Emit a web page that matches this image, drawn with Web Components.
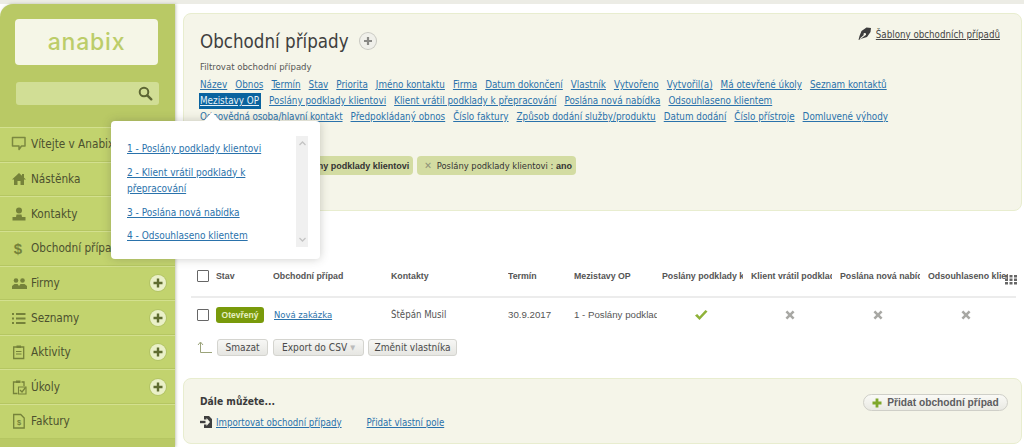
<!DOCTYPE html>
<html lang="cs"><head><meta charset="utf-8"><title>Obchodní případy</title>
<style>
html,body{margin:0;height:447px;overflow:hidden;background:#ecece5}
body{font:9.800px "DejaVu Sans",sans-serif;font-stretch:condensed;color:#444}
</style></head><body>
<ab-app>
<ab-sidebar slot="side">
<ab-nav icon="chat">Vítejte v Anabix</ab-nav>
<ab-nav icon="home">Nástěnka</ab-nav>
<ab-nav icon="user">Kontakty</ab-nav>
<ab-nav icon="dollar">Obchodní případy</ab-nav>
<ab-nav icon="users" plus>Firmy</ab-nav>
<ab-nav icon="list" plus>Seznamy</ab-nav>
<ab-nav icon="clip" plus>Aktivity</ab-nav>
<ab-nav icon="task" plus>Úkoly</ab-nav>
<ab-nav icon="inv">Faktury</ab-nav>
</ab-sidebar>
<ab-filter slot="main"></ab-filter>
<ab-table slot="main"></ab-table>
<ab-more slot="main"></ab-more>
<ab-popover slot="over"></ab-popover>
</ab-app>
<script>
const ICONS={
chat:'<path d="M1.500 1.500h12.500v8.500h-3.500l-2.500 3.500v-3.500H1.500z" fill="none" stroke="#7b8840" stroke-width="1.500" stroke-linejoin="round"/>',
home:'<path d="M1 8.500 8 2l3 2.800V3h2v3.700l2 1.800h-2V14H9.500v-4h-3v4H3V8.500z" fill="#75823a"/>',
user:'<circle cx="8" cy="4.500" r="3" fill="#75823a"/><path d="M5.500 8.500h5l.5 2.500h3.500v3.500h-13V11H5z" fill="#75823a"/>',
dollar:'<text x="7" y="14" text-anchor="middle" font-family="Liberation Sans" font-weight="700" font-size="15" fill="#75823a">$</text>',
users:'<circle cx="5" cy="5.500" r="2.300" fill="#75823a"/><circle cx="11.500" cy="5.500" r="2.300" fill="#75823a"/><path d="M1 14v-3l2.500-2h3L8 11l1.500-2h4L16 11v3z" fill="#75823a"/>',
list:'<path d="M1 3h2v2H1zm0 4.500h2v2H1zM1 12h2v2H1z" fill="#75823a"/><path d="M5 3h9.500v2H5zm0 4.500h9.500v2H5zM5 12h9.500v2H5z" fill="#75823a"/>',
clip:'<path d="M2.700 3h10v11.500h-10z" fill="none" stroke="#75823a" stroke-width="1.300"/><path d="M5.500 1.500h4.500v2.500H5.500z" fill="#75823a"/><path d="M5 7.500h5.500M5 10h5.500" stroke="#75823a" stroke-width="1.200"/>',
task:'<path d="M10.500 3H13v4M6.500 14.500H2.500V3h2.500" fill="none" stroke="#75823a" stroke-width="1.300"/><path d="M5 1.500h4.500v2.500H5z" fill="#75823a"/><path d="M7.500 8h7.500v7H7.500z" fill="none" stroke="#75823a" stroke-width="1.100"/><path d="m9 11 2 2 3.500-4.500" fill="none" stroke="#75823a" stroke-width="1.300"/>',
inv:'<path d="M2.700 1.500h7l3.500 3.500v10h-10.500z" fill="none" stroke="#75823a" stroke-width="1.300"/><text x="8" y="12" text-anchor="middle" font-family="Liberation Sans" font-weight="700" font-size="7.500" fill="#75823a">$</text>'
};
function def(name,css,html){
  customElements.define(name,class extends HTMLElement{
    connectedCallback(){
      if(this.shadowRoot)return;
      const r=this.attachShadow({mode:'open'});
      r.innerHTML='<style>'+css+'</style>'+(typeof html==='function'?html(this):html);
    }
  });
}
const linkCss='a{color:#2a72ab;text-decoration:underline;white-space:nowrap}';
const X='<svg width="10" height="10" viewBox="0 0 10 10"><path d="M2.300 .5 5 3.200 7.700 .5l1.800 1.800L6.800 5l2.700 2.700-1.800 1.800L5 6.800 2.300 9.500.5 7.700 3.200 5 .5 2.300z" fill="#a8a8a4"/></svg>';
def('ab-app',`:host{display:block;position:relative;width:1024px;height:447px;overflow:hidden}
.w{display:grid;grid-template-columns:175px 1fr;margin-top:4px;height:443px;background:#fff}
.m{display:flex;flex-direction:column;padding:9px 2px 0 8px}`,
`<div class="w"><slot name="side"></slot><div class="m"><slot name="main"></slot></div></div><slot name="over"></slot>`);

def('ab-sidebar',`:host{display:block;background:#b9c965;border-top-left-radius:13px;box-shadow:1px 0 3px rgba(90,100,50,.35);height:443px;overflow:hidden;position:relative;z-index:1}
.logo{margin:15px 17px 0 15px;height:46px;border-radius:4px;background:#f5f6e7;display:flex;align-items:center;justify-content:center;font:500 23px Inter,sans-serif;letter-spacing:.8px;color:#bccd69;font-stretch:normal}
.s{margin:17px 16px 0 16px;height:23px;border-radius:3px;background:#d1de95;display:flex;align-items:center;justify-content:flex-end;padding-right:6px;box-sizing:border-box}
.n{margin-top:22px;display:flex;flex-direction:column;background:#c2d36e}`,
`<div class="logo">anabix</div>
<div class="s"><svg width="15" height="15" viewBox="0 0 15 15"><circle cx="6" cy="6" r="4.300" fill="none" stroke="#5d6634" stroke-width="2"/><path d="m9.300 9.300 4 4" stroke="#5d6634" stroke-width="2.400" stroke-linecap="round"/></svg></div>
<div class="n"><slot></slot></div>`);

def('ab-nav',`:host{display:flex;align-items:center;height:34.650px;box-sizing:border-box;border-top:1px solid #d3e08f;border-bottom:1px solid #b5c662;padding:0 9px 0 11px;font:11.700px "DejaVu Sans",sans-serif;font-stretch:condensed;color:#4c512e;white-space:nowrap}
svg{flex:none;margin-right:4px}
span{flex:1}
.p{flex:none;width:16px;height:16px;border-radius:50%;background:#eaf0c8;box-shadow:0 0 0 1px #b3c466;display:grid;place-items:center}
.p svg{margin:0}`,
h=>`<svg width="16" height="16" viewBox="0 0 16 16">${ICONS[h.getAttribute('icon')]}</svg><span><slot></slot></span>${h.hasAttribute('plus')?'<div class="p"><svg width="10" height="10" viewBox="0 0 10 10"><path d="M3.800 .5h2.400v3.300H9.500v2.400H6.200v3.300H3.800V6.200H.5V3.800h3.300z" fill="#5f6c30"/></svg></div>':''}`);

def('ab-chip',`:host{display:inline-flex;align-items:center;height:19px;box-sizing:border-box;border-radius:4px;background:#d3dca2;padding:0 4px 0 7px;font-size:9.300px;color:#333;white-space:nowrap}
i{font-style:normal;color:#8f9377;margin-right:5px;font-size:10px}`,`<i>✕</i><slot></slot>`);

def('ab-filter',`:host{display:block;height:198px;box-sizing:border-box;background:#f5f5e9;border:1px solid #e8edcf;border-radius:8px;padding:0 21px 0 16px;font:9.800px "DejaVu Sans",sans-serif;font-stretch:condensed}
.t{display:flex;align-items:center;justify-content:space-between;padding-top:10px;height:34px;box-sizing:content-box}
h1{margin:0;font:400 18.600px "DejaVu Sans",sans-serif;font-stretch:condensed;color:#3f3f3f;display:flex;align-items:center;gap:11px}
.pl{width:16px;height:16px;border-radius:50%;background:#f0f0ea;box-shadow:0 0 0 1px #c9c9c2;display:grid;place-items:center}
.tp{display:flex;align-items:center;gap:4px;font-size:9.700px;color:#444;align-self:flex-start;margin-top:3px}
.tp a{color:#444;text-decoration:underline}
.f{margin-top:1px;color:#555;height:16px;line-height:16px;font-size:9.500px}
.rows{margin-top:2px}
.r{display:flex;gap:8px;height:16px;line-height:16px}
${linkCss}
.hi{background:#0a639f;color:#e8f2f8;padding:0 2px 0 1px;margin-left:-1px}
.tight{letter-spacing:-.1px}
.c{display:flex;gap:4px;margin-top:31px;padding-left:10px}
.c b{font:700 9px "Liberation Sans",sans-serif}
`,`<div class="t"><h1>Obchodní případy<span class="pl"><svg width="10" height="10" viewBox="0 0 10 10"><path d="M3.900 1h2.200v2.900H9v2.200H6.100V9H3.900V6.100H1V3.900h2.900z" fill="#8a8a86"/></svg></span></h1>
<div class="tp"><svg width="14" height="14" viewBox="0 0 14 14"><path d="M13 1 8.500.5 3.500 4 1.500 9 .5 13l3.500-1.500L9 10l3.500-5zM5.500 7.200a1.300 1.300 0 1 1 1.600 1.300L2.500 12l-.7-.6L5.800 8z" fill="#3d3d3d"/></svg><a>Šablony obchodních případů</a></div></div>
<div class="f">Filtrovat obchodní případy</div>
<div class="rows">
<div class="r"><a>Název</a><a>Obnos</a><a>Termín</a><a>Stav</a><a>Priorita</a><a>Jméno kontaktu</a><a>Firma</a><a>Datum dokončení</a><a>Vlastník</a><a>Vytvořeno</a><a>Vytvořil(a)</a><a>Má otevřené úkoly</a><a>Seznam kontaktů</a></div>
<div class="r"><a class="hi">Mezistavy OP</a><a>Poslány podklady klientovi</a><a>Klient vrátil podklady k přepracování</a><a>Poslána nová nabídka</a><a>Odsouhlaseno klientem</a></div>
<div class="r"><a class="tight">Odpovědná osoba/hlavní kontakt</a><a>Předpokládaný obnos</a><a>Číslo faktury</a><a>Způsob dodání služby/produktu</a><a>Datum dodání</a><a>Číslo přístroje</a><a>Domluvené výhody</a></div>
</div>
<div class="c"><ab-chip>Mezistavy OP :&nbsp;<b>Poslány podklady klientovi</b></ab-chip><ab-chip>Poslány podklady klientovi :&nbsp;<b>ano</b></ab-chip></div>`);

def('ab-btn',`:host{display:inline-flex;align-items:center;justify-content:center;height:17px;box-sizing:border-box;border:1px solid #d4d4cf;border-radius:3px;background:linear-gradient(#f7f7f5,#e6e6e2);font:10.100px "DejaVu Sans",sans-serif;font-stretch:condensed;color:#4b4b4b;white-space:nowrap}`,`<slot></slot>`);

def('ab-table',`:host{display:block;position:relative;height:167px;box-sizing:border-box;padding:0 6px 0 8px;font:9.700px "Liberation Sans",sans-serif}
.g{display:grid;grid-template-columns:25px 57px 118px 117px 66px 88px 89px 89px 88px 88px;align-items:center}
.h{height:87px;padding-top:45px;box-sizing:border-box;font:700 8.800px "Liberation Sans",sans-serif;color:#555;border-bottom:2px solid #ececec}
.h>div{overflow:hidden;white-space:nowrap;margin-right:8px}
.d>div{overflow:hidden;white-space:nowrap;margin-right:5px}
.h .cb,.d .cb{margin:0;padding:0 0 0 6px;overflow:visible}
.cb i{display:block;width:10px;height:10px;border:1px solid #666;background:#fff;border-radius:1px}
.d{height:31px;color:#555;padding-top:2px;box-sizing:border-box}
.st{display:inline-grid;place-items:center;width:48px;height:16px;border-radius:3px;background:#799a0b;color:#e6efc4;font:700 8.500px "Liberation Sans",sans-serif}
.k{font:9.600px "DejaVu Sans",sans-serif;font-stretch:condensed;color:#555}
a{color:#2a72ab;text-decoration:underline;font:9.400px "DejaVu Sans",sans-serif;font-stretch:condensed;margin-left:1px}
.d>.ic{margin-right:12px}
.ic svg{display:block;margin:0 auto}
.a{display:flex;align-items:center;gap:4px;margin-top:10px;padding-left:6px}
.a svg{margin-right:1px}
.a ab-btn:nth-of-type(2){margin-left:1px}
.cols{position:absolute;right:5px;top:63px}
.ar{color:#bbb;font-size:7px;margin-left:3px}
`,`<div class="g h"><div class="cb"><i></i></div><div>Stav</div><div>Obchodní případ</div><div>Kontakty</div><div>Termín</div><div>Mezistavy OP</div><div>Poslány podklady klientovi</div><div>Klient vrátil podklady k přepracování</div><div>Poslána nová nabídka</div><div>Odsouhlaseno klientem</div></div>
<svg class="cols" width="12" height="11" viewBox="0 0 12 11"><path d="M0 1h3v2.500H0zm4.500 0h3v2.500h-3zM9 1h3v2.500H9zM0 4.500h3V7H0zm4.500 0h3V7h-3zM9 4.500h3V7H9zM0 8h3v2.500H0zm4.500 0h3v2.500h-3zM9 8h3v2.500H9z" fill="#666"/></svg>
<div class="g d"><div class="cb"><i></i></div><div><span class="st">Otevřený</span></div><div><a>Nová zakázka</a></div><div class="k">Štěpán Musil</div><div>30.9.2017</div><div>1 - Poslány podklady klientovi</div>
<div class="ic"><svg width="14" height="12" viewBox="0 0 14 12"><path d="m1 6.500 2.200-1.500 2.300 2.500L11.500 1 13.500 2.500 5.500 11z" fill="#8fb238"/></svg></div>
<div class="ic">${X}</div><div class="ic">${X}</div><div class="ic">${X}</div></div>
<div class="a"><svg width="15" height="13" viewBox="0 0 15 13"><path d="M3.500 1.500V11.500H15M1 4l2.500-3L6 4" fill="none" stroke="#9ba37a" stroke-width="1"/></svg><ab-btn style="width:51px">Smazat</ab-btn><ab-btn style="width:91px">Export do CSV<span class="ar">▼</span></ab-btn><ab-btn style="width:89px">Změnit vlastníka</ab-btn></div>`);

def('ab-more',`:host{display:block;height:66px;box-sizing:border-box;background:#f5f5e9;border:1px solid #e8edcf;border-radius:8px;padding:15px 13px 0 16px;font:9.600px "DejaVu Sans",sans-serif;font-stretch:condensed}
.w{display:flex;justify-content:space-between}
b{display:block;font-size:10.200px;color:#3b3b3b;height:15px;line-height:15px}
.l{display:flex;align-items:center;margin-top:5px;height:16px}
.l svg{margin-right:4px}
a{color:#2a72ab;text-decoration:underline;margin-right:25px}
.b{display:flex;align-items:center;gap:5px;height:17px;width:145px;box-sizing:border-box;justify-content:center;border:1px solid #cfcfc8;border-radius:9px;background:linear-gradient(#fafaf6,#e9e9e3);font:700 10.200px "Liberation Sans",sans-serif;color:#5d5d60;white-space:nowrap}
`,`<div class="w"><div><b>Dále můžete...</b><div class="l"><svg width="12" height="12" viewBox="0 0 12 12"><path d="M4 0h5l3 3v9H4V8.500h2.500V10L10 6 6.500 2v1.500H4z" fill="#3f3f3f"/><path d="M0 4.800h5.500v2.400H0z" fill="#3f3f3f"/></svg><a>Importovat obchodní případy</a><a>Přidat vlastní pole</a></div></div>
<div class="b"><svg width="10" height="10" viewBox="0 0 10 10"><path d="M3.600 .5h2.800v3.100h3.100v2.800H6.400v3.100H3.600V6.400H.5V3.600h3.100z" fill="#7ea72b"/></svg><span>Přidat obchodní případ</span></div></div>`);

def('ab-popover',`:host{position:absolute;left:111px;top:121px;width:209px;height:138px;box-sizing:border-box;background:#fff;border-radius:4px;box-shadow:0 0 10px rgba(70,70,60,.28);z-index:5;display:flex;padding:15px 12px 12px 16px;font:10px "DejaVu Sans",sans-serif;font-stretch:condensed}
:host::before{content:"";position:absolute;left:93px;top:-9px;width:0;height:0;border:8px solid transparent;border-top:0;border-bottom:9px solid #fff}
.l{flex:1;display:flex;flex-direction:column;gap:7px;padding-top:5px}
a{color:#2a72ab;text-decoration:underline;line-height:16.500px;display:block}
.sb{flex:none;width:12px;height:111px;background:#f0f0f0;display:flex;flex-direction:column;justify-content:space-between;align-items:center;padding:5px 0;box-sizing:border-box}
`,`<div class="l"><a>1 - Poslány podklady klientovi</a><a>2 - Klient vrátil podklady k<br>přepracování</a><a>3 - Poslána nová nabídka</a><a>4 - Odsouhlaseno klientem</a></div>
<div class="sb"><svg width="7" height="5" viewBox="0 0 7 5"><path d="m.5 4 3-3 3 3" fill="none" stroke="#c4c4c4" stroke-width="1.300"/></svg><svg width="7" height="5" viewBox="0 0 7 5"><path d="m.5 1 3 3 3-3" fill="none" stroke="#c4c4c4" stroke-width="1.300"/></svg></div>`);
</script>
</body></html>
